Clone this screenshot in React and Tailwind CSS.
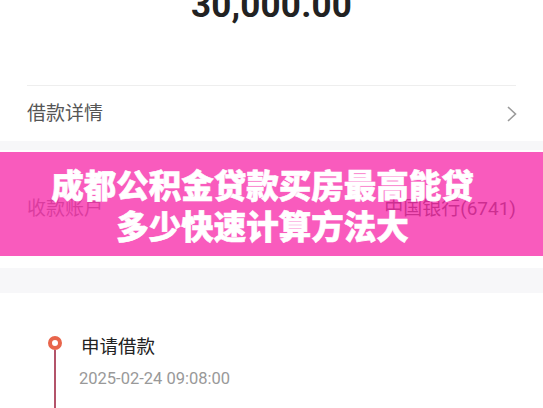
import React from "react";

const cjk = { fontFamily: "Roboto, 'Noto Sans CJK SC', sans-serif" };

const App = () => {
  return (
    <div
      className="relative w-[543px] h-[408px] overflow-hidden bg-[#f7f7f9]"
      style={cjk}
    >
      {/* amount card */}
      <div className="bg-white h-[141px]">
        <div className="h-[85px] flex justify-center">
          <div className="mt-[-12px] text-[35px] leading-[35px] font-bold text-[#222] tracking-[0.2px]">
            30,000.00
          </div>
        </div>
        <div className="mx-[27px] border-t border-[#eeeeee]" />
        <div className="h-[56px] px-[27px] flex items-center justify-between">
          <span className="text-[19px] text-[#555]">借款详情</span>
          <svg width="12" height="18" viewBox="0 0 12 18" className="mr-[-2px]">
            <path d="M2 2 L9.5 9 L2 16" fill="none" stroke="#9a9a9a" strokeWidth="1.6" />
          </svg>
        </div>
      </div>

      {/* account card (mostly under banner) */}
      <div className="mt-[9px] bg-white h-[118px] px-[27px] flex items-center justify-between">
        <span className="text-[19px] text-[#666]">收款账户</span>
        <span className="text-[19px] text-[#222]">中国银行(6741)</span>
      </div>

      {/* timeline card */}
      <div className="mt-[25px] bg-white h-[200px] pt-[42px] pl-[48px]">
        <div className="flex gap-[19px]">
          <div className="flex flex-col items-center w-[14px] pt-[1px]">
            <div className="w-[14px] h-[14px] rounded-full border-[4px] border-[#e8654b] bg-white" />
            <div className="w-[2px] h-[80px] bg-[#b3546a]" />
          </div>
          <div className="flex flex-col">
            <span className="text-[18.5px] leading-[24px] text-[#222]">申请借款</span>
            <span className="mt-[9px] text-[16.5px] leading-[22px] text-[#999] ml-[-2px]">
              2025-02-24 09:08:00
            </span>
          </div>
        </div>
      </div>

      {/* overlay banner */}
      <div className="absolute left-0 right-0 top-[152px] h-[104px] bg-[rgba(248,50,172,0.8)] flex flex-col items-center justify-center pr-[18px]">
        <div
          className="text-white text-[32.5px] leading-[41px] font-black text-center [-webkit-text-stroke:0.6px_white]"
          style={{ fontFamily: "'Noto Sans CJK SC', sans-serif" }}
        >
          <div>成都公积金贷款买房最高能贷</div>
          <div>多少快速计算方法大</div>
        </div>
      </div>
    </div>
  );
};

export default App;
